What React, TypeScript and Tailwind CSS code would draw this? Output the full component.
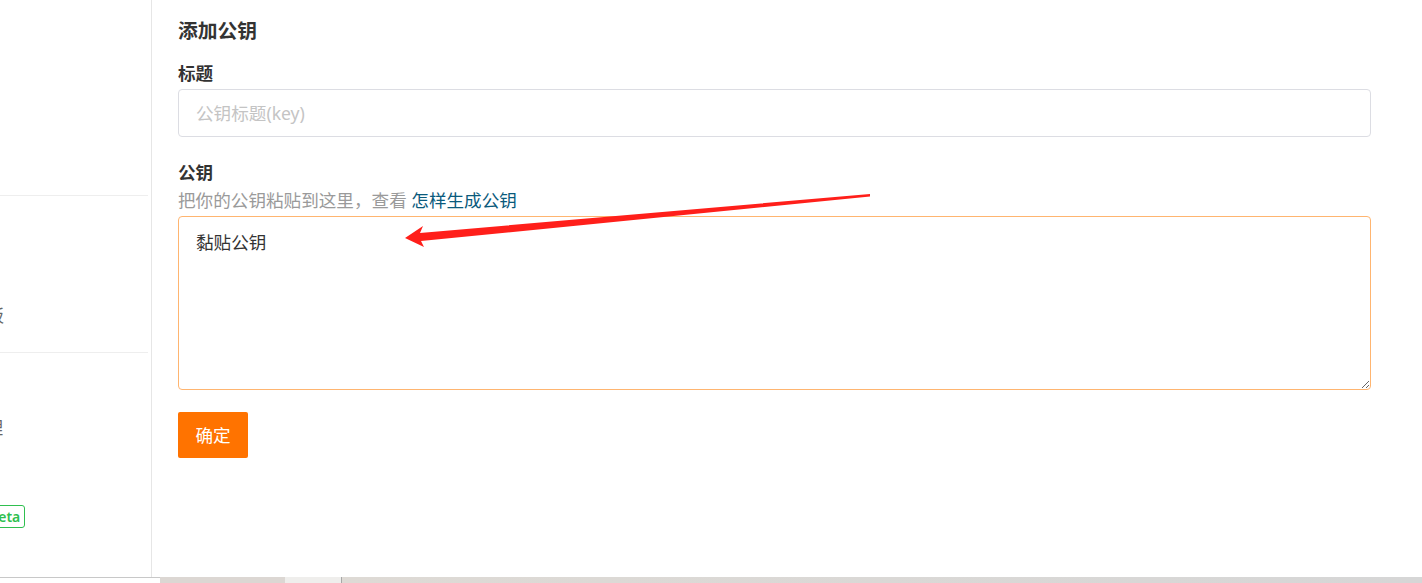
import * as React from "react";

const SideRow = ({ label, offset }: { label: string; offset: string }) => (
  <div className="h-6 leading-6 whitespace-nowrap text-[#666]">
    <span className={offset}>{label}</span>
  </div>
);

const Sidebar = () => (
  <aside className="w-[152px] shrink-0 border-r border-[#e6e6e6] overflow-hidden">
    <div className="h-[196px] mr-[3px] border-b border-[#eeeeee]" />
    <div className="h-[157px] mr-[3px] pt-[107px] border-b border-[#eeeeee]">
      <SideRow label="面板" offset="-ml-[31px] block" />
    </div>
    <div className="pt-[62px]">
      <SideRow label="管理" offset="-ml-[32px] block" />
      <div className="mt-[66px] flex">
        <span className="-ml-[16px] h-[23px] px-[4px] border border-[#2fbf4f] rounded-[3px] text-[14px] leading-[21px] font-semibold text-[#2fbf4f]">
          Beta
        </span>
      </div>
    </div>
  </aside>
);

const Arrow = () => (
  <svg
    className="absolute left-0 top-0 pointer-events-none"
    width="1422"
    height="583"
    viewBox="0 0 1422 583"
  >
    <polygon
      points="405,238 423,226 420,233 870,194 870,196.5 421,241 424,247"
      fill="#ff1f1a"
    />
  </svg>
);

export default function App() {
  return (
    <div className="relative w-[1422px] h-[583px] bg-white overflow-hidden font-['Noto_Sans','Noto_Sans_CJK_SC',sans-serif] text-[17.6px] text-[#333]">
      <div className="flex h-[577px]">
        <Sidebar />
        <main className="flex-1 pl-[26px] pr-[51px] pt-[17px]">
          <h2 className="text-[19.8px] leading-7 font-bold text-[#333]">添加公钥</h2>

          <label className="block mt-[16px] leading-6 font-bold">标题</label>
          <input
            className="mt-[4px] block w-full h-[48px] px-[17px] border border-[#dcdde3] rounded-[4px] outline-none placeholder:text-[#c4c4c4]"
            placeholder="公钥标题(key)"
          />

          <label className="block mt-[23px] leading-6 font-bold">公钥</label>
          <p className="mt-[4px] leading-6 text-[#9a9a9a]">
            把你的公钥粘贴到这里，查看{" "}
            <a className="text-[#0a5a7c]" href="#">
              怎样生成公钥
            </a>
          </p>
          <textarea
            className="mt-[4px] block w-full h-[174px] px-[17px] pt-[13px] leading-6 border border-[#ffb570] rounded-[4px] outline-none text-[#333]"
            defaultValue="黏贴公钥"
          />

          <button className="mt-[22px] w-[70px] h-[46px] bg-[#ff7300] text-white rounded-[2px]">
            确定
          </button>
        </main>
      </div>

      <div className="flex h-[6px]">
        <div className="w-[160px] bg-white border-t border-[#c8c8c8]" />
        <div className="w-[125px] bg-[#dcd7d3]" />
        <div className="w-[56px] bg-[#efeeec]" />
        <div className="w-[1px] bg-[#a8a8a8]" />
        <div className="flex-1 bg-gradient-to-r from-[#dedad5] to-[#d6d6d6]" />
      </div>

      <Arrow />
    </div>
  );
}
